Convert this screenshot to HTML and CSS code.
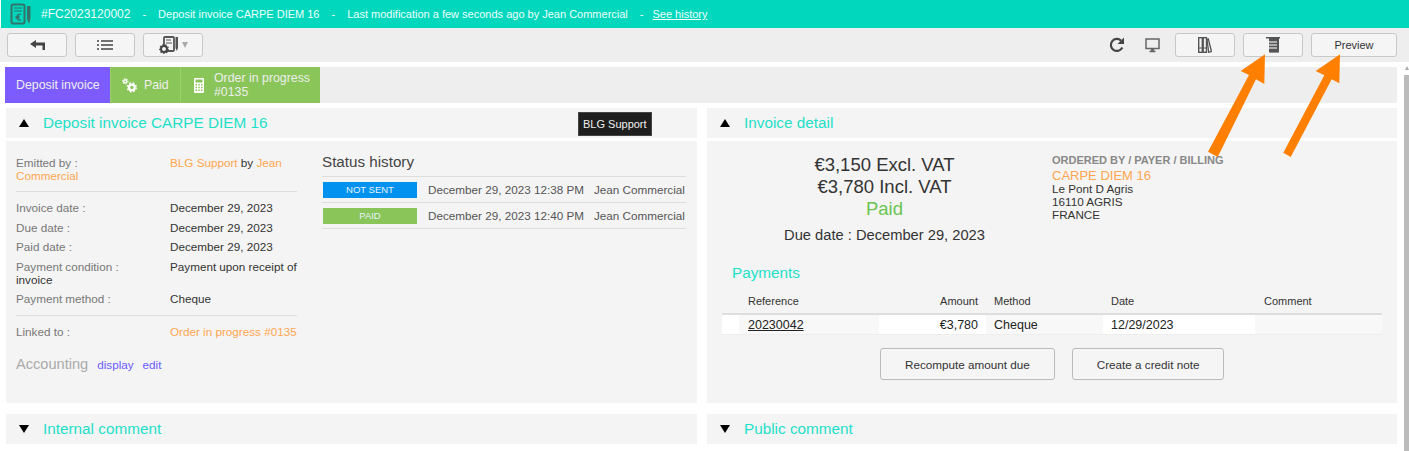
FILE: index.html
```html
<!DOCTYPE html>
<html lang="en">
<head>
    <meta charset="UTF-8">
    <title>Invoice FC2023120002</title>
    <link rel="stylesheet" href="styles.css">
</head>
<body>
    <div class="topbar">
        <svg class="topbar-logo" width="22" height="22" viewBox="0 0 22 22">
            <rect x="1.5" y="1.5" width="13" height="19" rx="1.5" fill="none" stroke="#33756c" stroke-width="2"/>
            <path d="M4 5h8M4 8h8" stroke="#33756c" stroke-width="1.2"/>
            <path d="M11 11.5c-2.6-1-4 .6-4 2.7s1.4 3.7 4 2.7M5.5 13.5h4M5.5 15h4" fill="none" stroke="#33756c" stroke-width="1.3"/>
            <path d="M17 3h3.5v13L19 21l-2-5z" fill="#33756c"/>
        </svg>
        <span class="ref">#FC2023120002</span>
        <span class="dash">-</span>
        <span>Deposit invoice CARPE DIEM 16</span>
        <span class="dash">-</span>
        <span>Last modification a few seconds ago by Jean Commercial</span>
        <span class="dash dash-last">-</span>
        <a class="history" href="#">See history</a>
    </div>

    <div class="toolbar">
        <button class="tool-btn">
            <svg width="15" height="10" viewBox="0 0 15 10"><path d="M0 4l6-4v2.500h9V10h-2.500V5.500H6V8z" fill="#444"/></svg>
        </button>
        <button class="tool-btn">
            <svg width="16" height="10" viewBox="0 0 16 10"><path d="M0 1h2M4 1h12M0 5h2M4 5h12M0 9h2M4 9h12" stroke="#444" stroke-width="1.6"/></svg>
        </button>
        <button class="tool-btn">
            <svg width="20" height="18" viewBox="0 0 20 18">
                <rect x="5" y="1" width="10" height="14" rx="1" fill="none" stroke="#555" stroke-width="1.8"/>
                <path d="M7 4h5M7 7h6" stroke="#555" stroke-width="1.2"/>
                <path d="M16.5 1H19v11l-1.2 3-1.300-3z" fill="#555"/>
                <circle cx="5" cy="13" r="3" fill="#f4f4f4" stroke="#444" stroke-width="2"/>
                <circle cx="5" cy="13" r="4.3" fill="none" stroke="#444" stroke-width="1.2" stroke-dasharray="1.5 1.5"/>
            </svg>
            <span class="caret"></span>
        </button>
        <div class="toolbar-right">
            <svg class="refresh" width="16" height="16" viewBox="0 0 16 16"><path d="M13.3 10.5A6 6 0 1 1 12 3.600" fill="none" stroke="#444" stroke-width="2.2"/><path d="M15 .5V7H8.500z" fill="#444"/></svg>
            <svg class="screen" width="15" height="15" viewBox="0 0 15 15"><rect x="1" y="1" width="13" height="9.500" fill="none" stroke="#666" stroke-width="1.5"/><path d="M4.500 13.500h6M6.500 11h2v2h-2z" stroke="#666" stroke-width="1.3" fill="#666"/></svg>
            <button class="tool-btn">
                <svg width="14" height="16" viewBox="0 0 14 16"><rect x=".7" y=".7" width="3.600" height="14.600" fill="none" stroke="#555" stroke-width="1.4"/><rect x="5.200" y=".7" width="3.300" height="14.600" fill="none" stroke="#555" stroke-width="1.400"/><path d="M9 2.500l1.300-.6 3.200 12.600-2.800.8z" fill="none" stroke="#555" stroke-width="1.300"/><path d="M1 11h3M5.500 11h3" stroke="#555" stroke-width="1"/></svg>
            </button>
            <button class="tool-btn">
                <svg width="14" height="16" viewBox="0 0 14 16"><path d="M0 0h14v1.500h-1V15l-1 1-1-.7-1 .7-1-.7-1 .7-1-.7-1 .7-1-.7-1 .7-1-1V1.500H0z" fill="#555"/><path d="M3 5h8M3 8h8M3 11h8" stroke="#ccc" stroke-width="1.300"/></svg>
            </button>
            <button class="tool-btn tool-text">Preview</button>
        </div>
    </div>

    <div class="tabs">
        <div class="tab tab-type">Deposit invoice</div>
        <div class="tab tab-ok tab-paid">
            <svg width="15" height="15" viewBox="0 0 16 16"><circle cx="10.5" cy="10" r="3" fill="none" stroke="#fff" stroke-width="2.4"/><circle cx="10.5" cy="10" r="4.800" fill="none" stroke="#fff" stroke-width="1.4" stroke-dasharray="2 1.8"/><circle cx="3.5" cy="3.500" r="1.700" fill="none" stroke="#fff" stroke-width="1.500"/><circle cx="3.500" cy="3.500" r="3" fill="none" stroke="#fff" stroke-width="1" stroke-dasharray="1.5 1.5"/></svg>
            <span>Paid</span>
        </div>
        <div class="tab tab-ok tab-order">
            <svg width="10" height="15" viewBox="0 0 10 15"><path fill-rule="evenodd" d="M1 0h8a1 1 0 0 1 1 1v13a1 1 0 0 1-1 1H1a1 1 0 0 1-1-1V1a1 1 0 0 1 1-1zm.5 1.500v3h7v-3zm0 4.500v1.500H3V6zm2.800 0v1.500h1.500V6zm2.800 0v1.500h1.400V6zm-5.600 2.800v1.500H3V8.800zm2.800 0v1.500h1.500V8.800zm2.800 0v1.500h1.400V8.800zm-5.600 2.700V13H3v-1.500zm2.800 0V13h1.500v-1.500zm2.800 0V13h1.400v-1.500z" fill="#fff"/></svg>
            <span>Order in progress<br>#0135</span>
        </div>
    </div>

    <div class="columns">
        <div class="panel-title">
            <span class="arrow-up"></span><h3>Deposit invoice CARPE DIEM 16</h3>
            <div class="tooltip">BLG Support</div>
        </div>
        <div class="panel-title">
            <span class="arrow-up"></span><h3>Invoice detail</h3>
        </div>

        <div class="panel-body body-left">
            <div class="info">
                <div class="info-group">
                    <p><span class="lbl">Emitted by :</span><a class="orange" href="#">BLG Support</a> by <a class="orange" href="#">Jean Commercial</a></p>
                </div>
                <div class="info-group">
                    <p><span class="lbl">Invoice date :</span>December 29, 2023</p>
                    <p><span class="lbl">Due date :</span>December 29, 2023</p>
                    <p><span class="lbl">Paid date :</span>December 29, 2023</p>
                    <p><span class="lbl">Payment condition :</span>Payment upon receipt of invoice</p>
                    <p><span class="lbl">Payment method :</span>Cheque</p>
                </div>
                <div class="info-group">
                    <p><span class="lbl">Linked to :</span><a class="orange" href="#">Order in progress #0135</a></p>
                </div>
                <div class="accounting">
                    <span class="acc-title">Accounting</span>
                    <a href="#">display</a>
                    <a href="#">edit</a>
                </div>
            </div>
            <div class="history-box">
                <h4>Status history</h4>
                <div class="hist-row">
                    <span class="badge badge-blue">NOT SENT</span>
                    <span class="hist-date">December 29, 2023 12:38 PM</span>
                    <span>Jean Commercial</span>
                </div>
                <div class="hist-row">
                    <span class="badge badge-green">PAID</span>
                    <span class="hist-date">December 29, 2023 12:40 PM</span>
                    <span>Jean Commercial</span>
                </div>
            </div>
        </div>

        <div class="panel-body body-right">
            <div class="summary">
                <div class="amounts">
                    <div class="amount">€3,150 Excl. VAT</div>
                    <div class="amount">€3,780 Incl. VAT</div>
                    <div class="amount paid">Paid</div>
                    <div class="due">Due date : December 29, 2023</div>
                </div>
                <div class="billing">
                    <div class="billing-title">ORDERED BY / PAYER / BILLING</div>
                    <a class="orange company" href="#">CARPE DIEM 16</a>
                    <div>Le Pont D Agris</div>
                    <div>16110 AGRIS</div>
                    <div>FRANCE</div>
                </div>
            </div>
            <h3 class="payments-title">Payments</h3>
            <table class="payments">
                <thead>
                    <tr>
                        <th class="c0"></th>
                        <th class="c1">Reference</th>
                        <th class="c2">Amount</th>
                        <th class="c3">Method</th>
                        <th class="c4">Date</th>
                        <th class="c5">Comment</th>
                    </tr>
                </thead>
                <tbody>
                    <tr>
                        <td class="white"></td>
                        <td class="c1"><a href="#">20230042</a></td>
                        <td class="white num">€3,780</td>
                        <td>Cheque</td>
                        <td class="white">12/29/2023</td>
                        <td></td>
                    </tr>
                </tbody>
            </table>
            <div class="actions">
                <button class="action">Recompute amount due</button>
                <button class="action">Create a credit note</button>
            </div>
        </div>

        <div class="panel-title row-end">
            <span class="arrow-down"></span><h3>Internal comment</h3>
        </div>
        <div class="panel-title row-end">
            <span class="arrow-down"></span><h3>Public comment</h3>
        </div>
    </div>

    <div class="scrollbar">
        <span class="scroll-up"></span>
        <span class="scroll-thumb"></span>
    </div>

    <!-- orange annotation arrows drawn over the screenshot -->
    <svg class="annot" width="1409" height="451" viewBox="0 0 1409 451">
        <path d="M1265 54.3L1264.3 84 1256 79.3 1217.7 157 1208 151.7 1249 75 1240.7 71z" fill="#ff8000"/>
        <path d="M1340 54.3L1339.3 83.3 1331.7 79.3 1290.7 157 1283.3 152.7 1324.3 75.3 1315.700 71z" fill="#ff8000"/>
    </svg>
</body>
</html>
```

FILE: styles.css
```css
html, body {
    margin: 0;
    padding: 0;
}

body {
    position: relative;
    height: 451px;
    overflow: hidden;
    background: #fff;
    font-family: "Liberation Sans", Arial, sans-serif;
    font-size: 11.7px;
    color: #333;
}

a {
    color: inherit;
    text-decoration: none;
}

p, h3, h4 {
    margin: 0;
    font-weight: normal;
}

/* top bar */
.topbar {
    height: 28px;
    margin-left: 1px;
    padding-left: 9px;
    display: flex;
    align-items: center;
    background-color: #00d7bd;
    color: #f0fffb;
    font-size: 11px;
}

.topbar-logo {
    margin-right: 9px;
}

.ref {
    font-size: 12px;
}

.dash {
    margin: 0 12px;
}

.dash-last {
    margin-right: 9px;
}

.history {
    text-decoration: underline;
}

/* toolbar */
.toolbar {
    height: 34px;
    box-sizing: border-box;
    padding: 5px 12px 5px 7px;
    display: flex;
    align-items: flex-start;
    gap: 8px;
    background-color: #eee;
}

.toolbar-right {
    margin-left: auto;
    display: flex;
    align-items: center;
    gap: 8px;
}

.tool-btn {
    width: 60px;
    height: 24px;
    padding: 0;
    display: flex;
    align-items: center;
    justify-content: center;
    gap: 3px;
    background: #f5f5f5;
    border: 1px solid #c8c8c8;
    border-radius: 3px;
}

.tool-text {
    width: 86px;
    font-family: inherit;
    font-size: 11px;
    color: #333;
}

.caret {
    width: 0;
    height: 0;
    border-left: 3.5px solid transparent;
    border-right: 3.5px solid transparent;
    border-top: 6px solid #aaa;
}

.refresh {
    margin-right: 12px;
}

.screen {
    margin-right: 7px;
}

/* status tabs */
.tabs {
    height: 36px;
    margin: 5px 12px 0 5px;
    display: flex;
    background-color: #eee;
}

.tab {
    display: flex;
    align-items: center;
    color: #eee;
    font-size: 12.35px;
    line-height: 14px;
}

.tab-type {
    width: 105px;
    box-sizing: border-box;
    padding-left: 11px;
    background-color: #7c5cff;
}

.tab-ok {
    background-color: #89c558;
    border-left: 1px solid #9bd06e;
    box-sizing: border-box;
}

.tab-paid {
    width: 70px;
    padding-left: 11px;
    gap: 7px;
}

.tab-order {
    width: 140px;
    padding-left: 13px;
    gap: 10px;
}

/* panels */
.columns {
    width: 1391px;
    margin: 5px 0 0 6px;
    display: grid;
    grid-template-columns: 691px 690px;
    grid-template-rows: 30px 262px 38px;
    column-gap: 10px;
    row-gap: 3px;
}

.panel-title {
    position: relative;
    display: flex;
    align-items: center;
    padding-left: 13px;
    background-color: #f4f4f4;
}

.panel-title h3 {
    margin-left: 14px;
    font-size: 15.3px;
    color: #1ee0c8;
}

.row-end {
    margin-top: 8px;
}

.arrow-up,
.arrow-down {
    width: 0;
    height: 0;
    border-left: 5.5px solid transparent;
    border-right: 5.5px solid transparent;
}

.arrow-up {
    border-bottom: 8px solid #000;
}

.arrow-down {
    border-top: 8px solid #000;
}

.tooltip {
    position: absolute;
    left: 572px;
    top: 4px;
    height: 24px;
    line-height: 22px;
    padding: 0 4px;
    background-color: #1e1e1e;
    border: 1px solid #444;
    color: #eee;
    font-size: 11px;
    white-space: nowrap;
    box-sizing: border-box;
}

.panel-body {
    background-color: #f4f4f4;
}

.body-left {
    display: flex;
    padding: 15px 11px 0 10px;
}

.info {
    width: 281px;
    flex: none;
}

.info-group {
    padding-bottom: 9px;
    margin-bottom: 9px;
    border-bottom: 1px solid #ddd;
}

.info-group:nth-child(2) {
    padding-bottom: 10px;
}

.info-group:nth-child(3) {
    border-bottom: none;
    margin-bottom: 0;
}

.info-group p {
    margin-bottom: 6.5px;
    line-height: 13px;
}

.info-group p:last-child {
    margin-bottom: 0;
}

.lbl {
    display: inline-block;
    width: 154px;
    color: #777;
}

.orange {
    color: #ffa650;
}

.accounting {
    display: flex;
    align-items: baseline;
    color: #6b5cff;
    gap: 9px;
    margin-top: 9px;
}

.acc-title {
    color: #aaa;
    font-size: 14.6px;
}

.history-box {
    margin-left: 25px;
    flex: 1;
}

.history-box h4 {
    height: 24px;
    margin-top: -4px;
    font-size: 15.2px;
    line-height: 20px;
    color: #444;
}

.hist-row {
    height: 25px;
    display: flex;
    align-items: center;
    border-top: 1px solid #ddd;
    color: #555;
    white-space: nowrap;
}

.hist-row:last-child {
    border-bottom: 1px solid #ddd;
}

.badge {
    width: 94px;
    height: 16px;
    line-height: 15px;
    margin: 0 11px 0 1px;
    text-align: center;
    font-size: 9.5px;
    color: #e8f4ff;
}

.badge-blue {
    background-color: #0092ee;
}

.badge-green {
    background-color: #89c558;
}

.hist-date {
    margin-right: 10px;
}

.body-right {
    padding: 13px 15px 0 15px;
}

.summary {
    display: flex;
    height: 103px;
}

.amounts {
    width: 325px;
    flex: none;
    text-align: center;
}

.amount {
    font-size: 18.5px;
    line-height: 22px;
}

.paid {
    color: #6cc452;
}

.due {
    margin-top: 7px;
    font-size: 14.7px;
}

.billing {
    line-height: 13px;
    margin-left: 5px;
}

.billing-title {
    margin-bottom: 2px;
    color: #888;
    font-weight: bold;
    font-size: 11px;
}

.company {
    font-size: 13px;
}

.payments-title {
    margin: 7px 0 10px 10px;
    font-size: 15.3px;
    color: #1ee0c8;
}

.payments {
    width: 660px;
    border-collapse: collapse;
    table-layout: fixed;
    font-size: 11px;
}

.payments th {
    height: 18px;
    padding: 0 8px 3px;
    font-weight: normal;
    text-align: left;
    border-bottom: 2px solid #ddd;
}

.payments td {
    height: 19px;
    padding: 0 8px;
    font-size: 12.5px;
    background-color: #f8f8f8;
    border-bottom: 1px solid #eee;
    color: #222;
}

.payments td a {
    text-decoration: underline;
}

.payments td.white {
    background-color: #fff;
}

.payments .num,
.payments .c2 {
    text-align: right;
}

.payments .c1,
.payments .c5 {
    padding-left: 9px;
}

.c0 { width: 1px; }
.c1 { width: 123px; }
.c2 { width: 91px; }
.c3 { width: 101px; }
.c4 { width: 136px; }
.c5 { width: 110px; }

.actions {
    display: flex;
    gap: 17px;
    margin: 13px 0 0 158px;
}

.action {
    height: 32px;
    padding: 0 24px;
    background: #f5f5f5;
    border: 1px solid #bbb;
    border-radius: 3px;
    font-family: inherit;
    font-size: 11.7px;
    color: #333;
    white-space: nowrap;
}

/* page scrollbar */
.scrollbar {
    position: absolute;
    right: 0;
    top: 62px;
    bottom: 0;
    width: 5px;
    background-color: #fff;
}

.scroll-up {
    display: block;
    margin: 4px auto 0;
    width: 0;
    height: 0;
    border-left: 2.5px solid transparent;
    border-right: 2.5px solid transparent;
    border-bottom: 4px solid #aaa;
}

.scroll-thumb {
    display: block;
    margin-top: 5px;
    height: 380px;
    background-color: #bbb;
}

.annot {
    position: absolute;
    left: 0;
    top: 0;
    pointer-events: none;
}
```
